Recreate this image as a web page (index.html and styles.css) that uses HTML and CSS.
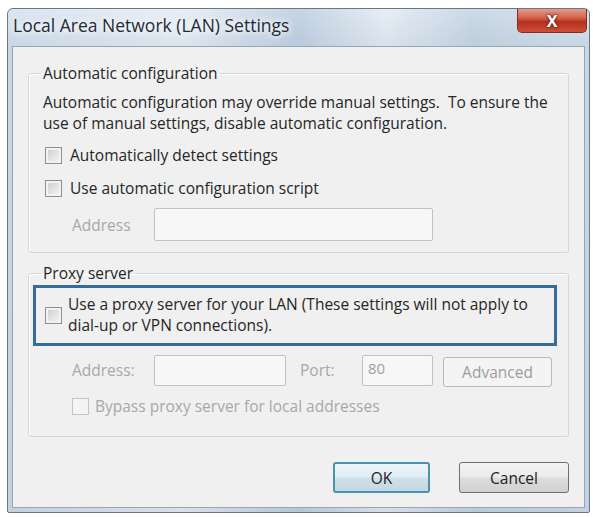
FILE: index.html
```html
<!DOCTYPE html>
<html lang="en">
<head>
    <meta charset="UTF-8">
    <title>Local Area Network (LAN) Settings</title>
    <link rel="stylesheet" href="styles.css">
</head>
<body>
    <div class="window">
        <div class="titlebar">
            <span class="title">Local Area Network (LAN) Settings</span>
            <button class="close-btn">X</button>
        </div>

        <div class="client">
            <fieldset class="group group-auto">
                <legend>Automatic configuration</legend>
                <p class="note">Automatic configuration may override manual settings.&nbsp; To ensure the<br>use of manual settings, disable automatic configuration.</p>
                <label class="check-row row-detect"><span class="checkbox"></span>Automatically detect settings</label>
                <label class="check-row row-script"><span class="checkbox"></span>Use automatic configuration script</label>
                <div class="field-row row-script-addr disabled">
                    <span class="field-label">Address</span>
                    <input class="textbox tb-script" type="text" disabled>
                </div>
            </fieldset>

            <fieldset class="group group-proxy">
                <legend>Proxy server</legend>
                <label class="check-row focus-row"><span class="checkbox"></span><span>Use a proxy server for your LAN (These settings will not apply to<br>dial-up or VPN connections).</span></label>
                <div class="field-row row-proxy disabled">
                    <span class="field-label">Address:</span>
                    <input class="textbox tb-addr" type="text" disabled>
                    <span class="field-label port-label">Port:</span>
                    <input class="textbox tb-port" type="text" value="80" disabled>
                    <button class="btn btn-advanced" disabled>Advanced</button>
                </div>
                <label class="check-row row-bypass disabled"><span class="checkbox"></span>Bypass proxy server for local addresses</label>
            </fieldset>

            <div class="actions">
                <button class="btn btn-ok">OK</button>
                <button class="btn btn-cancel">Cancel</button>
            </div>
        </div>
    </div>
</body>
</html>
```

FILE: styles.css
```css
* {
    box-sizing: border-box;
}

body {
    margin: 0;
    background-color: #ffffff;
    font-family: 'Open Sans', 'Liberation Sans', sans-serif;
    font-size: 15.5px;
    color: #262626;
}

/* window frame */
.window {
    width: 583px;
    height: 505px;
    margin: 8px 0 0 7px;
    padding: 0 4px 4px;
    border: 1px solid #6a7686;
    border-radius: 6px 6px 2px 2px;
    display: flex;
    flex-direction: column;
    background:
        linear-gradient(90deg, rgba(255,255,255,0) 0%, rgba(255,255,255,0.35) 30%, rgba(150,170,195,0.3) 50%, rgba(255,255,255,0.3) 65%, rgba(160,180,200,0.25) 80%, rgba(255,255,255,0) 100%),
        linear-gradient(180deg, #dce6f0 0%, #c8d6e5 38px, #c3d1e0 100%);
}

.titlebar {
    height: 37px;
    display: flex;
    justify-content: space-between;
    align-items: flex-start;
}

.title {
    padding: 5px 0 0 1px;
    font-size: 17.5px;
    line-height: 22px;
    color: #1f2a36;
    text-shadow: 0 0 6px #ffffff, 0 0 10px #ffffff;
}

.close-btn {
    width: 70px;
    height: 24px;
    margin-right: -2px;
    border: 1px solid #7a3026;
    border-top: none;
    border-radius: 0 0 5px 5px;
    background: linear-gradient(180deg, #e69a8a 0%, #d2604b 40%, #b92f1c 55%, #c9503a 100%);
    color: #ffffff;
    font-family: 'Open Sans', sans-serif;
    font-size: 16px;
    font-weight: bold;
    line-height: 20px;
    text-shadow: 0 0 2px #5a1a10, 0 0 3px #5a1a10;
    padding: 0;
}

.client {
    flex: 1;
    padding: 17px 15px 0;
    background-color: #f0f0f0;
    border: 1px solid #9aa5b2;
}

/* group boxes */
.group {
    margin: 0;
    padding: 10px 13px 11px;
    border: 1px solid #d3d6d9;
    border-radius: 3px;
    min-width: 0;
    box-shadow: inset 1px 1px 0 #ffffff;
}

.group legend {
    padding: 0 2px;
    margin-left: -1px;
    line-height: 18px;
}

.group-proxy {
    margin-top: 11px;
    padding: 3px 13px 19px;
}

.note {
    margin: 0 0 0 1px;
    line-height: 21px;
    white-space: nowrap;
}

.check-row {
    display: flex;
    align-items: center;
    gap: 8px;
    height: 24px;
    padding-left: 3px;
    white-space: nowrap;
}

.row-detect {
    margin-top: 9px;
}

.row-script {
    margin-top: 9px;
}

.checkbox {
    width: 17px;
    height: 17px;
    flex: none;
    border: 1px solid #8e8f8f;
    background: linear-gradient(135deg, #c8ccd2 0%, #f6f6f6 100%);
    box-shadow: inset 0 0 0 2px #f2f2f2;
}

.field-row {
    display: flex;
    align-items: center;
}

.row-script-addr {
    margin-top: 8px;
    height: 33px;
}

.disabled {
    color: #a8a8a8;
}

.disabled .checkbox {
    border-color: #c4c4c4;
    background: #f4f4f4;
    box-shadow: none;
}

.field-label {
    width: 82px;
    margin-left: 30px;
}

.textbox {
    height: 33px;
    border: 1px solid #c2c2c2;
    border-radius: 2px;
    background-color: #f7f7f7;
    font-family: inherit;
    font-size: 15px;
    color: #a0a0a0;
    padding: 0 5px;
}

.tb-script {
    width: 279px;
}

/* proxy section */
.focus-row {
    height: 61px;
    margin-left: -9px;
    margin-right: -2px;
    padding: 6px 0 7px 9px;
    gap: 6px;
    border: 3px solid #346d9b;
    line-height: 21px;
}

.row-proxy {
    margin-top: 7px;
    height: 34px;
}

.tb-addr {
    width: 132px;
    height: 31px;
}

.port-label {
    width: 62px;
    margin-left: 14px;
}

.tb-port {
    width: 71px;
    height: 31px;
    padding-top: 0;
    padding-bottom: 5px;
}

.btn {
    height: 31px;
    border: 1px solid #707070;
    border-radius: 3px;
    background: linear-gradient(180deg, #f4f4f4 0%, #ebebeb 48%, #dddddd 52%, #d0d0d0 100%);
    font-family: inherit;
    font-size: 15.5px;
    color: #222222;
    padding: 0;
}

.btn-advanced {
    width: 109px;
    height: 30px;
    margin-left: 10px;
    margin-top: 4px;
    border-color: #b6babd;
    background: #f4f4f4;
    color: #9c9c9c;
}

.row-bypass {
    margin-top: 8px;
    height: 22px;
    padding-left: 30px;
    gap: 6px;
}

/* dialog buttons */
.actions {
    display: flex;
    justify-content: flex-end;
    gap: 29px;
    margin-top: 25px;
}

.btn-ok {
    width: 97px;
    border: 2px solid #4a92ad;
    background: linear-gradient(180deg, #eef6fa 0%, #e0edf3 48%, #cfe1ea 52%, #c4d8e2 100%);
}

.btn-cancel {
    width: 110px;
}
```
